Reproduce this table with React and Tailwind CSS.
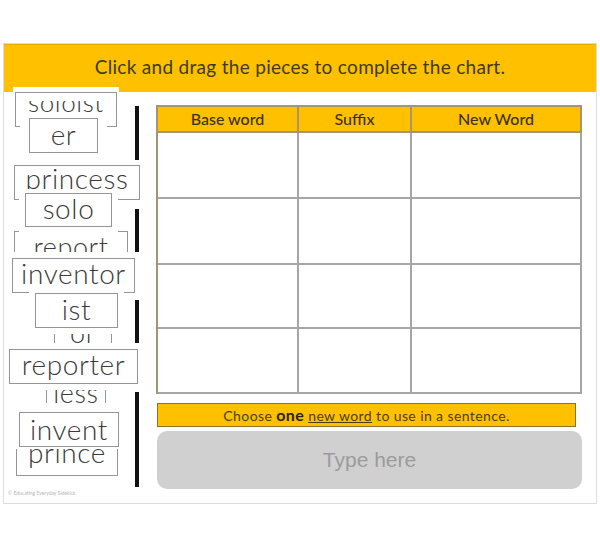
import React from "react";

// page coords of the slide's padding box
const OX = 4;
const OY = 44;

const pieces = [
  { text: "soloist", x: 15, y: 92, w: 102, h: 35, base: 112, size: 26, clip: [101, 125], pt: 5, px: 2, pb: 4 },
  { text: "er", x: 29, y: 118, w: 69, h: 35, base: 145, size: 28, pt: 5, px: 9, pb: 5 },
  { text: "princess", x: 14, y: 165, w: 126, h: 35, base: 189, size: 28, clip: [167, 190], pt: 3, px: 2, pb: 3 },
  { text: "report", x: 14, y: 231, w: 114, h: 35, base: 257, size: 27, pt: 3, px: 2, pb: 3 },
  { text: "solo", x: 25, y: 193, w: 87, h: 34, base: 219, size: 28, pt: 4, px: 6, pb: 6 },
  { text: "inventor", x: 12, y: 258, w: 123, h: 35, base: 284, size: 28, pt: 6, px: 3, pb: 3 },
  { text: "or", x: 54, y: 318, w: 58, h: 35, base: 343, size: 27, pt: 2, px: 2, pb: 2 },
  { text: "ist", x: 35, y: 293, w: 83, h: 35, base: 320, size: 28, pt: 2, px: 6, pb: 6 },
  { text: "less", x: 46, y: 378, w: 60, h: 35, base: 403, size: 27, pt: 2, px: 2, pb: 2 },
  { text: "reporter", x: 9, y: 349, w: 129, h: 35, base: 375, size: 28, pt: 6, px: 3, pb: 6 },
  { text: "prince", x: 16, y: 441, w: 102, h: 35, base: 463, size: 28, clip: [449, 474], pt: 2, px: 2, pb: 2 },
  { text: "invent", x: 19, y: 412, w: 100, h: 35, base: 440, size: 28, pt: 9, px: 6, pb: 2 },
];

const bars = [
  [106, 160],
  [209, 252],
  [300, 343],
  [392, 487],
];

function Piece({ p }) {
  const left = p.x - p.px - OX;
  const top = p.y - p.pt - OY;
  const clip = p.clip || [p.y + 2, p.y + p.h - 2];
  const textTop = p.base - 0.887 * p.size - clip[0];
  return (
    <div
      className="absolute bg-white"
      style={{ left, top, width: p.w + 2 * p.px, height: p.h + p.pt + p.pb }}
    >
      <div
        className="absolute border border-[#959595]"
        style={{ left: p.px, top: p.pt, width: p.w, height: p.h }}
      />
      <div
        className="absolute overflow-hidden"
        style={{ left: p.px, top: clip[0] - (p.y - p.pt), width: p.w, height: clip[1] - clip[0] }}
      >
        <div
          className="absolute inset-x-0 text-center whitespace-nowrap leading-none text-[#3a3a3a] font-light tracking-[0.6px]"
          style={{ top: textTop, fontSize: p.size }}
        >
          {p.text}
        </div>
      </div>
    </div>
  );
}

const rowHeights = ["h-[66px]", "h-[66px]", "h-[64px]", "h-[65px]"];

export default function App() {
  return (
    <div className="w-[600px] h-[545px] bg-white overflow-hidden" style={{ fontFamily: "Lato, 'Open Sans', sans-serif" }}>
      <div className="relative ml-[3px] mt-[43px] w-[594px] h-[461px] border border-[#dcdcdc]">
        {/* HEADER */}
        <div className="h-[48px] bg-[#ffc000] border-t border-[#e3ae00] flex items-center justify-center">
          <p className="text-[19px] text-[#403a1a] tracking-[0.3px] pb-[2px]">
            Click and drag the pieces to complete the chart.
          </p>
        </div>

        {/* CHART AREA */}
        <div className="pl-[152px] pr-[14px] pt-[13px]">
          <div className="border-l-2 border-t-2 border-[#a39674]">
            <div className="grid grid-cols-[141px_113px_170px]">
              {["Base word", "Suffix", "New Word"].map((h) => (
                <div
                  key={h}
                  className="h-[26px] bg-[#ffc000] border-r-2 border-b-2 border-[#a39674] flex items-center justify-center text-[16px] font-medium text-[#3b3315]"
                >
                  {h}
                </div>
              ))}
            </div>
            {rowHeights.map((rh, i) => (
              <div key={i} className="grid grid-cols-[141px_113px_170px]">
                <div className={`${rh} border-r-2 border-b-2 border-[#a6a6a6]`} />
                <div className={`${rh} border-r-2 border-b-2 border-[#a6a6a6]`} />
                <div className={`${rh} border-r-2 border-b-2 border-[#a6a6a6]`} />
              </div>
            ))}
          </div>

          <div className="mt-[9px] ml-[1px] w-[419px] h-[24px] bg-[#ffc000] border border-[#8c7420] flex items-center justify-center text-[14px] tracking-[0.4px] text-[#4a3f12]">
            <span>Choose&nbsp;</span>
            <span className="font-bold text-[16px] text-[#2a240c]">one</span>
            <span>&nbsp;</span>
            <span className="underline">new word</span>
            <span>&nbsp;to use in a sentence.</span>
          </div>

          <div className="mt-[4px] ml-[1px] w-[425px] h-[58px] rounded-[10px] bg-[#d1d0d1] flex items-center justify-center">
            <span className="text-[21px] text-[#9c9b9c]" style={{ fontFamily: "'Liberation Sans', Arial, sans-serif" }}>
              Type here
            </span>
          </div>
        </div>

        {/* WORD PIECES CANVAS */}
        {bars.map(([a, b]) => (
          <div
            key={a}
            className="absolute w-[4px] bg-[#111]"
            style={{ left: 135 - OX, top: a - OY, height: b - a }}
          />
        ))}
        {pieces.map((p) => (
          <Piece key={p.text} p={p} />
        ))}

        <p className="absolute left-[4px] top-[446px] text-[5px] text-[#b5b5b5] whitespace-nowrap">
          © Educating Everyday Sidekick
        </p>
      </div>
    </div>
  );
}
